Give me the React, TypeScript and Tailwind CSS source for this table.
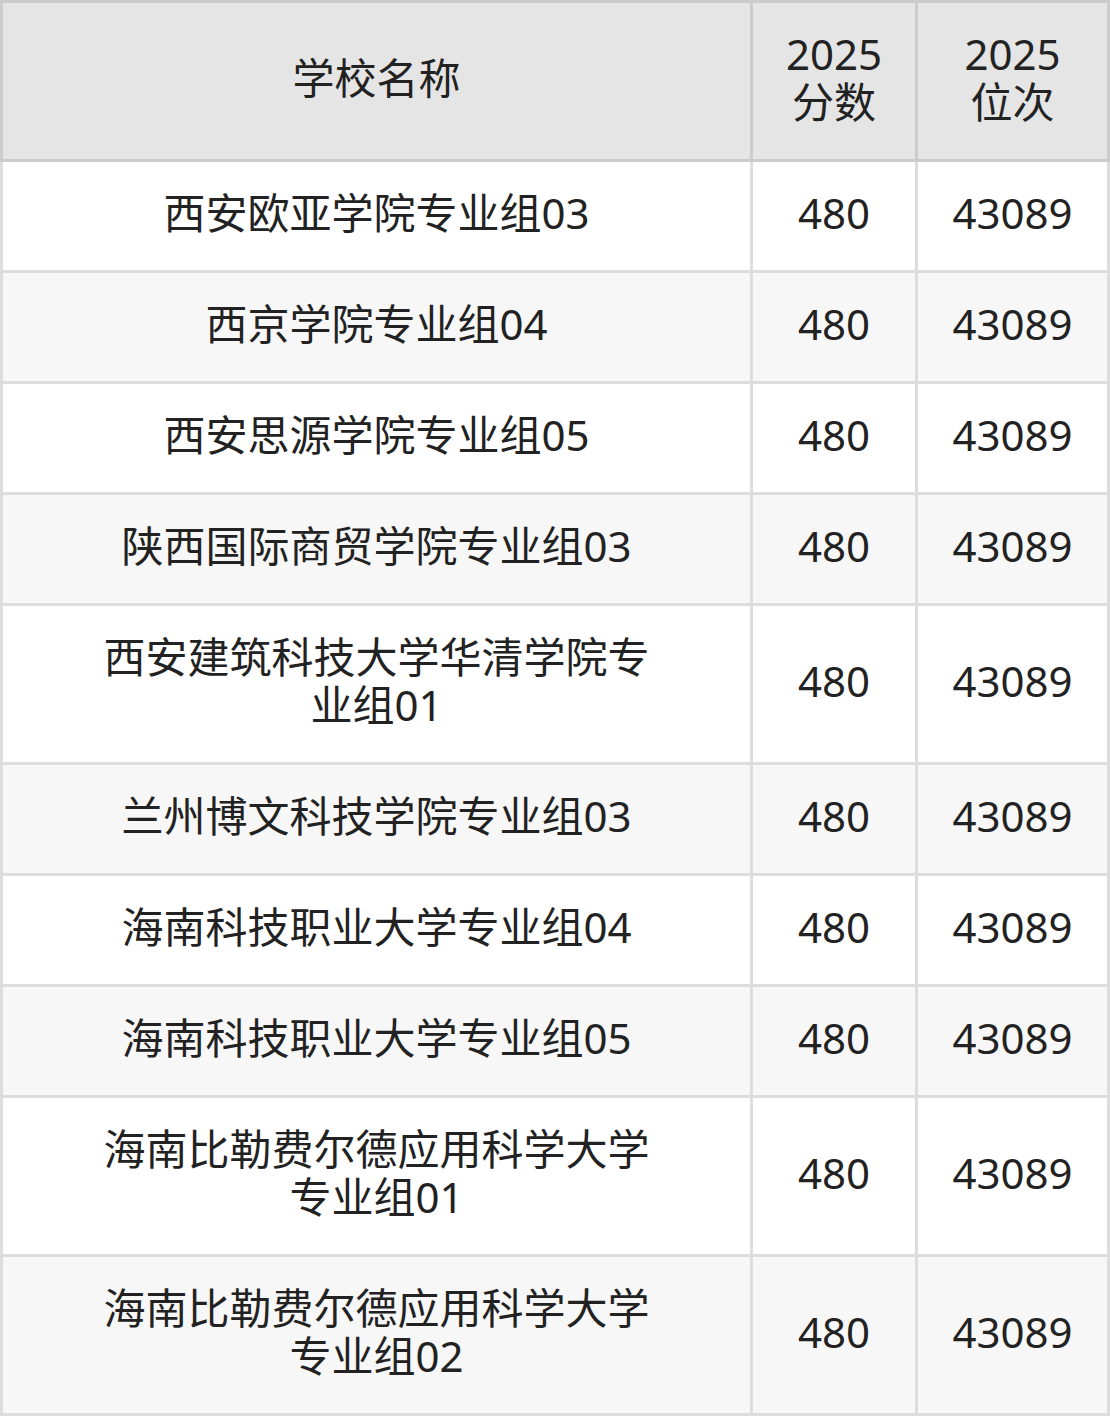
import React from "react";

const rows: { name: string; score: string; rank: string }[] = [
  { name: "西安欧亚学院专业组03", score: "480", rank: "43089" },
  { name: "西京学院专业组04", score: "480", rank: "43089" },
  { name: "西安思源学院专业组05", score: "480", rank: "43089" },
  { name: "陕西国际商贸学院专业组03", score: "480", rank: "43089" },
  { name: "西安建筑科技大学华清学院专业组01", score: "480", rank: "43089" },
  { name: "兰州博文科技学院专业组03", score: "480", rank: "43089" },
  { name: "海南科技职业大学专业组04", score: "480", rank: "43089" },
  { name: "海南科技职业大学专业组05", score: "480", rank: "43089" },
  { name: "海南比勒费尔德应用科学大学专业组01", score: "480", rank: "43089" },
  { name: "海南比勒费尔德应用科学大学专业组02", score: "480", rank: "43089" },
];

const cell =
  "flex items-center justify-center text-center px-[16px] pt-[27px] pb-[33px] border-r-[3px] border-b-[3px]";

const App = () => {
  return (
    <div
      className="w-[1110px] text-[42px] leading-[48px] text-[#222]"
      style={{ fontFamily: '"Noto Sans", "Noto Sans CJK SC", sans-serif' }}
    >
      <div className="grid grid-cols-[753px_165px_192px] bg-[#e5e5e5]">
        <div className={`${cell} border-l-[3px] border-t-[3px] border-[#ccc]`}>学校名称</div>
        <div className={`${cell} border-t-[3px] border-[#ccc]`}>
          2025
          <br />
          分数
        </div>
        <div className={`${cell} border-t-[3px] border-[#ccc]`}>
          2025
          <br />
          位次
        </div>
      </div>
      {rows.map((row, index) => (
        <div
          key={index}
          className={`grid grid-cols-[753px_165px_192px] ${index % 2 === 0 ? "bg-white" : "bg-[#f7f7f7]"}`}
        >
          <div className={`${cell} border-l-[3px] border-[#ddd] px-[100px]`}>{row.name}</div>
          <div className={`${cell} border-[#ddd]`}>{row.score}</div>
          <div className={`${cell} border-[#ddd]`}>{row.rank}</div>
        </div>
      ))}
    </div>
  );
};

export default App;
